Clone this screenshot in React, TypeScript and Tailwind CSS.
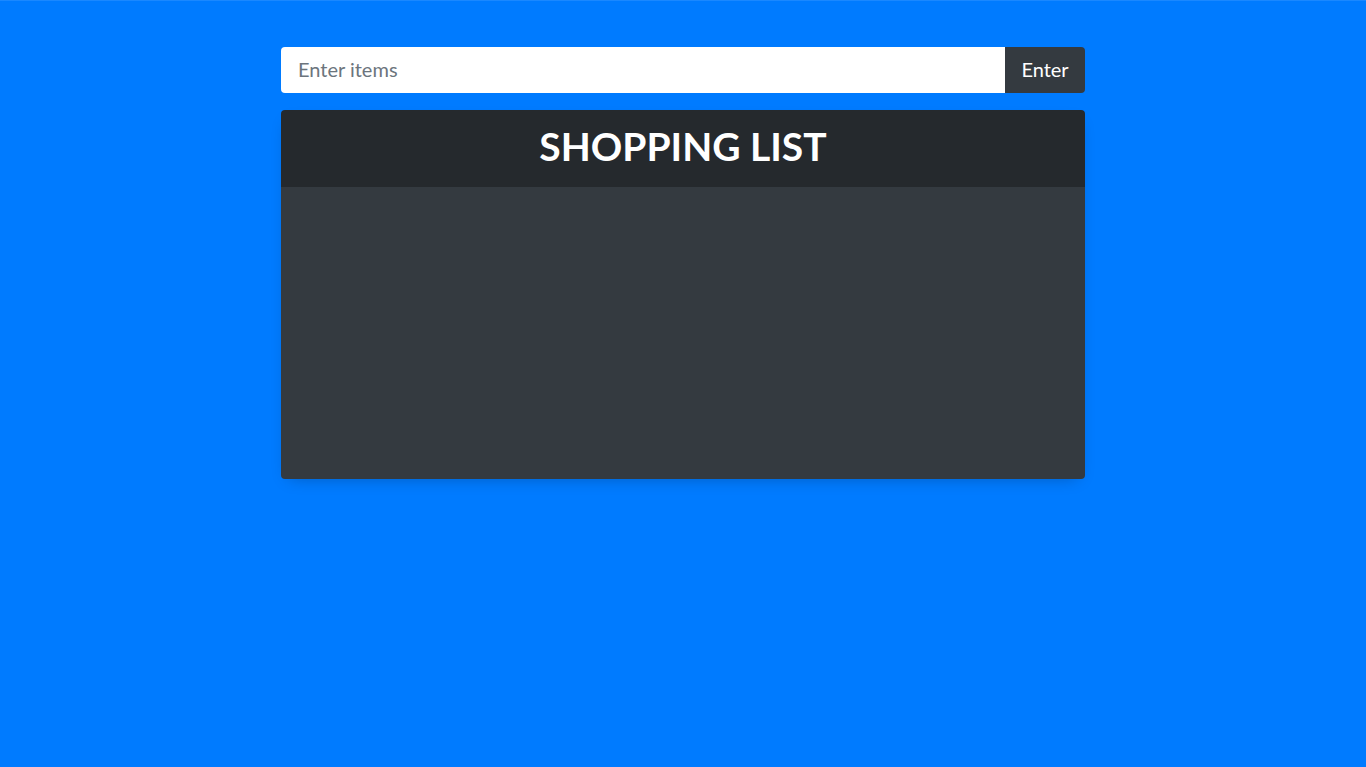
import React from "react";

export default function App() {
    const [item, setItem] = React.useState<string>("");

    return (
        <div className="min-h-screen bg-[#007bff] border-t border-[#1a88ff] font-['Lato','Open_Sans',sans-serif]">
            <div className="w-[804px] mx-auto pt-[46px]">
                <div className="flex h-[46px]">
                    <input
                        type="text"
                        value={item}
                        onChange={(e) => setItem(e.target.value)}
                        placeholder="Enter items"
                        className="flex-1 bg-white rounded-l-[4px] px-[17px] pb-[3px] text-[20px] text-[#495057] placeholder:text-[#6c757d] outline-none"
                    />
                    <button className="w-[80px] bg-[#343a40] text-white text-[20px] pb-[3px] rounded-r-[4px]">Enter</button>
                </div>

                <div className="mt-[17px] rounded-[4px] overflow-hidden shadow-[0_6px_16px_-8px_rgba(0,0,0,0.3)]">
                    <div className="h-[77px] bg-[#25292d] flex items-center justify-center pb-[4px]">
                        <h1 className="text-white text-[39px] font-bold leading-none">SHOPPING LIST</h1>
                    </div>
                    <div className="h-[292px] bg-[#343a40]"></div>
                </div>
            </div>
        </div>
    );
}
